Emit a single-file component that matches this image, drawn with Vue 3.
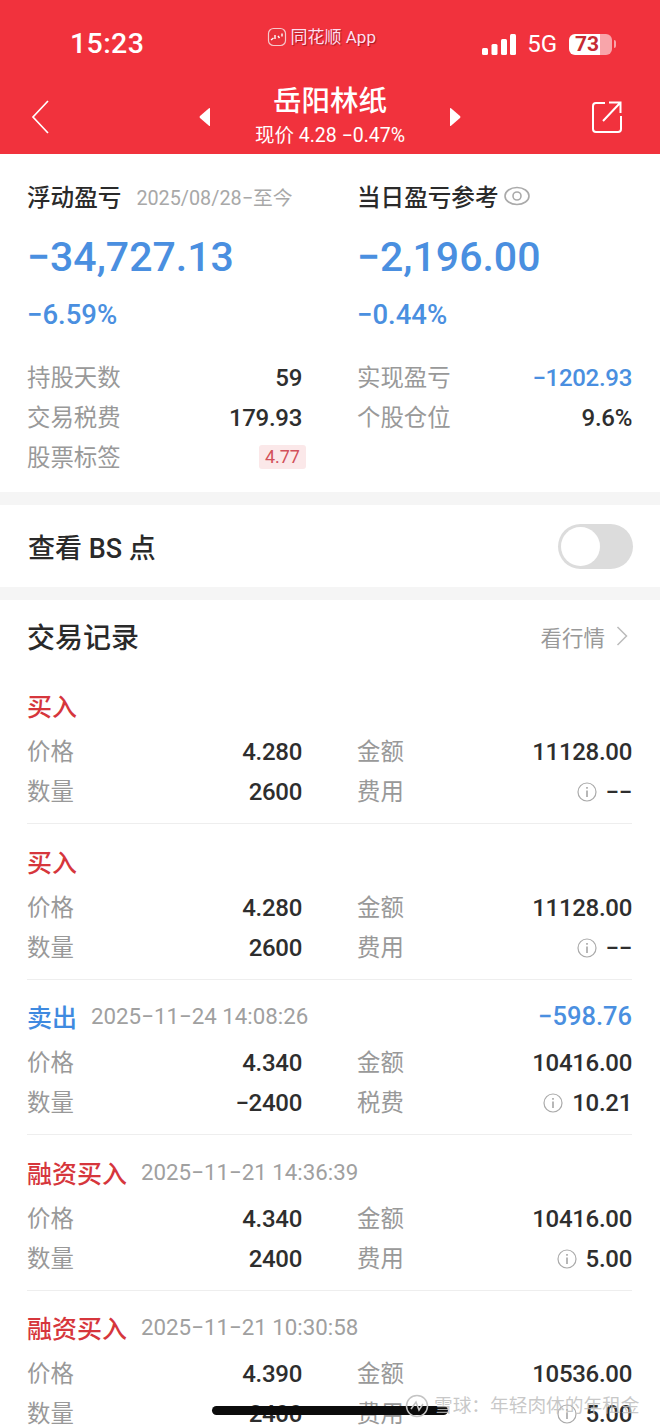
<script setup>
const stats = [
  { l: '持股天数', v: '59', r: '实现盈亏', w: '−1202.93', blue: true },
  { l: '交易税费', v: '179.93', r: '个股仓位', w: '9.6%' },
]
const trades = [
  { t: '买入', c: 'red', d: '', p: '4.280', a: '11128.00', q: '2600', f: '费用', fv: '−−' },
  { t: '买入', c: 'red', d: '', p: '4.280', a: '11128.00', q: '2600', f: '费用', fv: '−−' },
  { t: '卖出', c: 'blue', d: '2025−11−24 14:08:26', e: '−598.76', p: '4.340', a: '10416.00', q: '−2400', f: '税费', fv: '10.21' },
  { t: '融资买入', c: 'red', d: '2025−11−21 14:36:39', p: '4.340', a: '10416.00', q: '2400', f: '费用', fv: '5.00' },
  { t: '融资买入', c: 'red', d: '2025−11−21 10:30:58', p: '4.390', a: '10536.00', q: '2400', f: '费用', fv: '5.00' },
]
</script>

<template>
  <div class="page">
    <header class="head">
      <div class="status">
        <span class="time">15:23</span>
        <span class="app">
          <svg width="20" height="20" viewBox="0 0 20 20" class="applogo">
            <rect x="1.500" y="1.500" width="17" height="17" rx="5" fill="#e8323c" stroke="#f6c9cc" stroke-width="1.200"/>
            <path d="M4 13l2.500-2M8 8v4M11 9l1.500 2M15 6.500v3" stroke="#fff" stroke-width="1.400" fill="none"/>
          </svg>
          同花顺 App
        </span>
        <span class="sys">
          <svg width="34" height="21" viewBox="0 0 34 21">
            <rect x="0" y="14" width="6" height="7" rx="1.500" fill="#fff"/>
            <rect x="9.500" y="10" width="6" height="11" rx="1.500" fill="#fff"/>
            <rect x="19" y="5" width="6" height="16" rx="1.500" fill="#fff"/>
            <rect x="28" y="0" width="6" height="21" rx="1.500" fill="#fff"/>
          </svg>
          <span class="net">5G</span>
          <span class="batt"><span class="battnum">73</span></span>
          <span class="nub"></span>
        </span>
      </div>
      <div class="nav">
        <svg class="back" width="20" height="36" viewBox="0 0 20 36"><path d="M18 2L3 18l15 16" fill="none" stroke="#fff" stroke-width="1.700"/></svg>
        <div class="mid">
          <svg class="tri" width="14" height="20" viewBox="0 0 14 20"><path d="M12 1.500v17q0 1-1 .3L2 11q-1-1 0-2l9-7.800q1-.7 1 .3z" fill="#fff"/></svg>
          <div class="name">
            <div class="n1">岳阳林纸</div>
            <div class="n2">现价 4.28 −0.47%</div>
          </div>
          <svg class="tri" width="14" height="20" viewBox="0 0 14 20"><path d="M2 1.500v17q0 1 1 .3L12 11q1-1 0-2L3 1.200q-1-.7-1 .3z" fill="#fff"/></svg>
        </div>
        <svg class="share" width="32" height="34" viewBox="0 0 32 34"><path d="M14 3H5q-3 0-3 3v23q0 3 3 3h22q3 0 3-3V16" fill="none" stroke="#fff" stroke-width="2"/><path d="M12 21L29 3M18 2.500h11.500V13" fill="none" stroke="#fff" stroke-width="2"/></svg>
      </div>
    </header>

    <section class="summary">
      <div class="cols top">
        <div>
          <div class="ttl"><b>浮动盈亏</b><span class="since">2025/08/28−至今</span></div>
          <div class="big">−34,727.13</div>
          <div class="pct">−6.59%</div>
        </div>
        <div>
          <div class="ttl"><b>当日盈亏参考</b>
            <svg class="eye" width="28" height="20" viewBox="0 0 28 20"><ellipse cx="14" cy="10" rx="12" ry="8.500" fill="none" stroke="#aaa" stroke-width="1.600"/><circle cx="14" cy="10" r="4" fill="none" stroke="#aaa" stroke-width="1.600"/></svg>
          </div>
          <div class="big">−2,196.00</div>
          <div class="pct">−0.44%</div>
        </div>
      </div>
      <div class="rows">
        <div v-for="s in stats" :key="s.l" class="cols row">
          <div class="kv"><span class="k">{{ s.l }}</span><span class="v">{{ s.v }}</span></div>
          <div class="kv"><span class="k">{{ s.r }}</span><span class="v" :class="{ blue: s.blue }">{{ s.w }}</span></div>
        </div>
        <div class="cols row">
          <div class="kv"><span class="k">股票标签</span><span class="tag">4.77</span></div>
        </div>
      </div>
    </section>

    <section class="bs">
      <span class="bst">查看 BS 点</span>
      <span class="switch"><span class="knob"></span></span>
    </section>

    <section class="trades">
      <div class="thead">
        <span class="tt">交易记录</span>
        <span class="more">看行情
          <svg width="12" height="20" viewBox="0 0 12 20"><path d="M1.500 1l9 9-9 9" fill="none" stroke="#bbb" stroke-width="1.500"/></svg>
        </span>
      </div>
      <div v-for="(t, i) in trades" :key="i" class="trade">
        <div class="tline">
          <span class="side" :class="t.c">{{ t.t }}</span>
          <span v-if="t.d" class="date">{{ t.d }}</span>
          <span v-if="t.e" class="earn">{{ t.e }}</span>
        </div>
        <div class="cols row">
          <div class="kv"><span class="k">价格</span><span class="v">{{ t.p }}</span></div>
          <div class="kv"><span class="k">金额</span><span class="v">{{ t.a }}</span></div>
        </div>
        <div class="cols row">
          <div class="kv"><span class="k">数量</span><span class="v">{{ t.q }}</span></div>
          <div class="kv"><span class="k">{{ t.f }}</span>
            <span class="v fee">
              <svg width="20" height="20" viewBox="0 0 20 20"><circle cx="10" cy="10" r="9" fill="none" stroke="#aaa" stroke-width="1.200"/><path d="M10 8.500V15M10 5v1.800" stroke="#888" stroke-width="1.200"/></svg>
              {{ t.fv }}
            </span>
          </div>
        </div>
      </div>
    </section>

    <div class="indicator"></div>
    <div class="mark">
      <svg width="24" height="24" viewBox="0 0 24 24"><circle cx="12" cy="12" r="10.500" fill="none" stroke="#c4c4c4" stroke-width="1.500"/><path d="M6 15l5-7 3 8 4-6" fill="none" stroke="#c4c4c4" stroke-width="1.500"/></svg>
      雪球：年轻肉体的年租金
    </div>
  </div>
</template>

<style>
html, body { margin: 0; background: #fff; }
</style>

<style scoped>
.page {
  position: relative;
  width: 660px;
  height: 1428px;
  overflow: hidden;
  background: #f5f5f5;
  color: #222;
  font-family: Roboto, "Noto Sans CJK SC", sans-serif;
}
.head { height: 154px; background: #f1323d; color: #fff; box-sizing: border-box; }
.status {
  height: 80px;
  padding: 0 44px 0 70px;
  display: flex;
  align-items: flex-start;
  justify-content: space-between;
}
.time { font-size: 28.5px; font-weight: 500; line-height: 32px; margin-top: 28px; letter-spacing: .4px; }
.app {
  display: flex;
  align-items: center;
  gap: 4px;
  font-size: 17px;
  line-height: 20px;
  margin-top: 27px;
  margin-left: 16px;
  color: #fde;
  text-shadow: 1px 1px 1px rgba(90, 0, 0, .5);
}
.sys { display: flex; align-items: center; margin-top: 33px; height: 22px; }
.net { font-size: 24px; line-height: 22px; margin-left: 11px; }
.batt {
  width: 43px;
  height: 21px;
  margin-left: 12px;
  border-radius: 6px;
  background: linear-gradient(90deg, #fff 0 73%, #f8a5aa 73%);
  display: flex;
  align-items: center;
  padding-left: 6px;
  box-sizing: border-box;
}
.battnum { color: #c62a33; font-size: 21px; font-weight: 700; line-height: 21px; }
.nub { width: 2px; height: 8px; margin-left: 2px; background: #f8a5aa; border-radius: 0 2px 2px 0; }
.nav { height: 74px; display: flex; align-items: flex-start; justify-content: space-between; padding: 0 37px 0 22px; }
.back { margin-top: 19px; margin-left: 8px; }
.mid { display: flex; align-items: flex-start; gap: 42px; margin-left: 19px; }
.tri { margin-top: 27px; }
.name { text-align: center; width: 152px; }
.n1 { font-size: 28.5px; line-height: 36px; font-weight: 500; margin-top: 4px; white-space: nowrap; }
.n2 { font-size: 19.5px; line-height: 24px; margin-top: 4px; margin-left: -10px; margin-right: -10px; white-space: nowrap; }
.share { margin-top: 20px; }

.summary { height: 338px; background: #fff; padding: 0 28px 0 27px; box-sizing: border-box; margin-bottom: 13px; }
.cols { display: grid; grid-template-columns: 275px 275px; column-gap: 55px; }
.top { padding-top: 25px; }
.ttl { display: flex; align-items: center; height: 34px; }
.ttl b { font-size: 23.6px; font-weight: 500; color: #2a2a2a; }
.since { font-size: 19.8px; color: #a8a8a8; margin-left: 15px; }
.eye { margin-left: 4px; }
.big { font-size: 41px; line-height: 48px; font-weight: 500; color: #4a8fe0; margin-top: 20px; }
.pct { font-size: 27.5px; line-height: 32px; font-weight: 500; color: #4a8fe0; margin-top: 18px; }
.rows { margin-top: 26px; }
.row { height: 40px; align-items: center; }
.kv { display: flex; justify-content: space-between; align-items: center; }
.k { font-size: 23.4px; color: #999; padding-bottom: 2px; }
.v { font-size: 24px; font-weight: 500; color: #2e2e2e; letter-spacing: -.3px; padding-top: 2px; }
.v.blue { color: #4a8fe0; }
.tag {
  font-size: 18px;
  line-height: 24px;
  padding: 0 6px;
  margin-right: -4px;
  color: #d2505a;
  background: #fbe8e9;
  border-radius: 3px;
}

.bs {
  height: 82px;
  background: #fff;
  margin-bottom: 13px;
  padding: 0 27px 0 28px;
  display: flex;
  align-items: center;
  justify-content: space-between;
}
.bst { font-size: 27px; font-weight: 500; color: #2a2a2a; }
.switch {
  width: 75px;
  height: 45px;
  border-radius: 23px;
  background: #dcdcdc;
  position: relative;
  display: block;
}
.knob {
  position: absolute;
  left: 3px;
  top: 3px;
  width: 39px;
  height: 39px;
  border-radius: 50%;
  background: #fff;
}

.trades { background: #fff; padding: 0 28px 0 27px; height: 840px; }
.thead { height: 78px; box-sizing: border-box; padding-bottom: 6px; display: flex; align-items: center; justify-content: space-between; }
.tt { font-size: 28px; font-weight: 500; color: #2a2a2a; }
.more { display: flex; align-items: center; gap: 11px; font-size: 21.5px; color: #999; margin-right: 4px; }
.trade { border-bottom: 1px solid #eee; height: 146px; margin-bottom: 9.5px; box-sizing: border-box; padding-top: 7px; }
.tline { height: 40px; display: flex; align-items: center; margin-bottom: 6px; }
.side { font-size: 25px; font-weight: 500; }
.side.red { color: #d6363c; }
.side.blue { color: #3f8ae0; }
.date { font-size: 22.3px; color: #a0a0a0; margin-left: 14px; }
.earn { margin-left: auto; font-size: 25.5px; font-weight: 500; color: #4a8fe0; }
.fee { display: flex; align-items: center; gap: 9px; }

.indicator {
  position: absolute;
  left: 212px;
  top: 1406px;
  width: 236px;
  height: 9px;
  background: #0c0c0c;
  border-radius: 5px;
}
.mark {
  position: absolute;
  left: 405px;
  top: 1392px;
  display: flex;
  align-items: center;
  gap: 5px;
  font-size: 18.7px;
  line-height: 28px;
  color: rgba(190, 190, 190, .85);
  white-space: nowrap;
}
</style>
